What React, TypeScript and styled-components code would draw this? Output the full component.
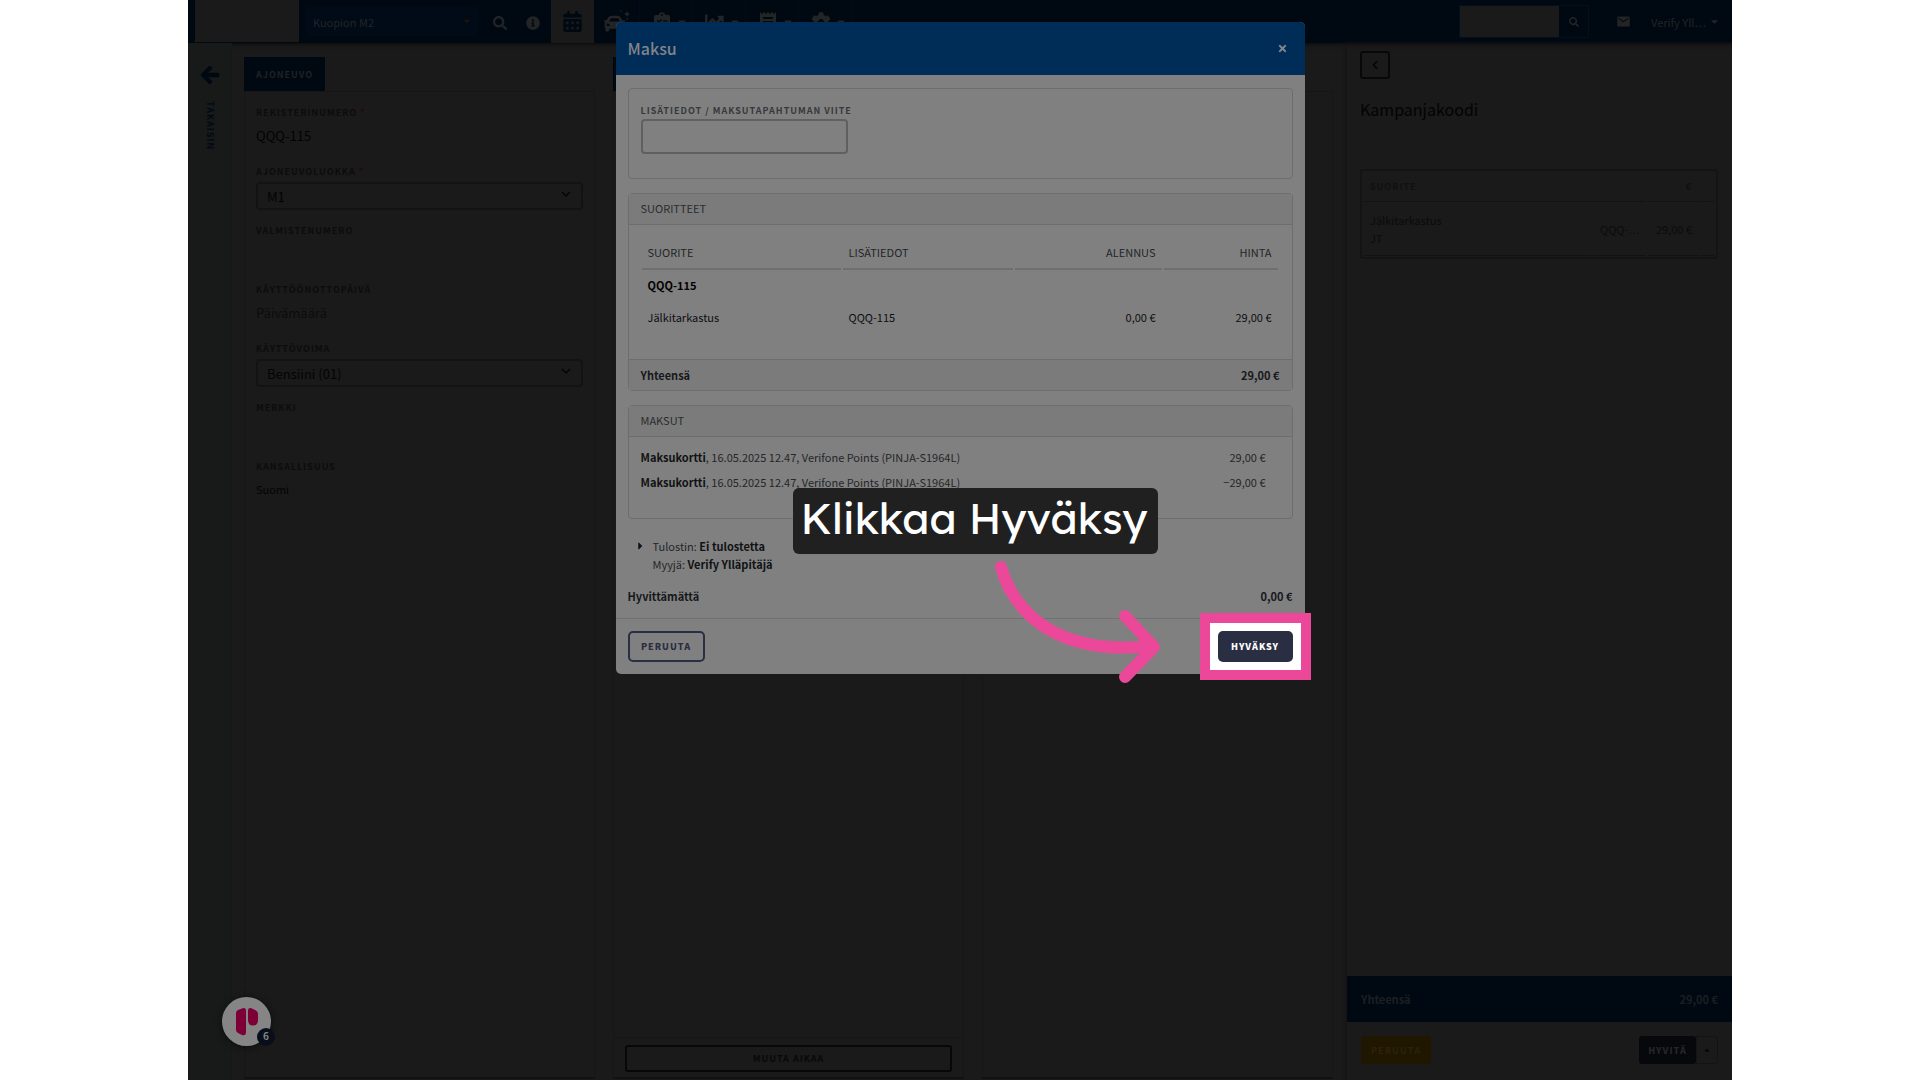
import React from "react";
import styled, { createGlobalStyle } from "styled-components";
import {
  FaArrowLeft,
  FaCalendarAlt,
  FaCar,
  FaCaretDown,
  FaCaretRight,
  FaCaretUp,
  FaChartLine,
  FaChevronLeft,
  FaCog,
  FaInfoCircle,
  FaSearch,
  FaTimes,
} from "react-icons/fa";
import { MdMail } from "react-icons/md";

const sans = `"Source Sans Pro", "Noto Sans CJK SC", "Noto Sans", sans-serif`;
const c = {
  page: "#1a1a1a",
  rail: "#181a19",
  navy: "#000912",
  line: "#161616",
  ink: "#030303",
  label: "#0c0c0c",
  onNavy: "#222426",
  modal: "#808080",
  modalHead: "#002c58",
  modalBar: "#7b7b7b",
  modalLine: "#6d6d6d",
  modalInk: "#16181b",
  modalLabel: "#36383b",
  dark: "#2a2e43",
  pink: "#ec4899",
};

const Global = createGlobalStyle`
  *, *::before, *::after { box-sizing: border-box; }
  body { margin: 0; background: #fff; font-family: ${sans}; }
  button, input, select { font-family: inherit; margin: 0; }
`;

/* ---------- page ---------- */
const Shell = styled.div`
  position: relative;
  display: flex;
  flex-direction: column;
  max-width: 1544px;
  height: 100vh;
  margin: 0 auto;
  overflow: hidden;
  background: ${c.page};
  color: ${c.ink};
  font-size: 12px;
  line-height: 18px;
`;

const TopBar = styled.header`
  display: flex;
  align-items: stretch;
  height: 43px;
  flex: none;
  padding-left: 7px;
  background: ${c.navy};
  box-shadow: 0 1px 4px #0a0a0a;
`;

const Brand = styled.div`
  width: 104px;
  margin: 0 7px 1px 0;
  background: ${c.page};
`;

const SitePicker = styled.div`
  position: relative;
  width: 172px;
  align-self: center;
  color: #231008;
  svg { position: absolute; right: 6px; top: 9px; pointer-events: none; }
`;

const SiteSelect = styled.select`
  display: block;
  width: 100%;
  height: 29px;
  padding: 0 7px;
  border: 0;
  appearance: none;
  background: #000b17;
  color: ${c.onNavy};
  font-size: 11px;
`;

const Tools = styled.div`
  display: flex;
  gap: 19px;
  padding: 2px 11px 0 15px;
`;

const BarButton = styled.button<{ $width: number; $active?: boolean; $line?: boolean }>`
  display: flex;
  align-items: center;
  justify-content: center;
  width: ${(p) => p.$width}px;
  padding: 0;
  border: 0;
  border-right: ${(p) => (p.$line ? "1px solid #010c17" : "0")};
  background: ${(p) => (p.$active ? c.page : "transparent")};
  color: ${(p) => (p.$active ? c.navy : c.onNavy)};
`;

const MenuButton = styled(BarButton)`
  justify-content: space-between;
  padding: 0 4px 0 11px;
`;

const MenuIcon = styled.span`
  display: flex;
  justify-content: center;
  width: 22px;
`;

const Spring = styled.div`
  flex: 1;
`;

const SearchForm = styled.form`
  display: flex;
  align-self: center;
  height: 33px;
  margin-right: 27px;
  border: 1px solid #00101f;
`;

const SearchInput = styled.input`
  width: 99px;
  padding: 0 8px;
  border: 0;
  background: ${c.page};
  color: ${c.ink};
`;

const SearchSubmit = styled.button`
  display: flex;
  align-items: center;
  justify-content: center;
  width: 29px;
  padding: 0;
  border: 0;
  background: ${c.navy};
  color: ${c.onNavy};
`;

const UserButton = styled.button`
  display: flex;
  align-items: center;
  justify-content: space-between;
  width: 69px;
  margin: 0 12px 0 20px;
  padding: 0;
  border: 0;
  background: none;
  color: ${c.onNavy};
  font-size: 11px;
  white-space: nowrap;
`;

const Body = styled.div`
  display: flex;
  flex: 1;
  min-height: 0;
`;

const Rail = styled.nav`
  width: 44px;
  flex: none;
  padding-top: 22px;
  background: ${c.rail};
  border-right: 1px solid #161817;
`;

const BackLink = styled.a`
  display: flex;
  flex-direction: column;
  align-items: center;
  gap: 16px;
  color: ${c.navy};
  font-size: 9px;
  line-height: 12px;
  font-weight: 700;
  letter-spacing: 1px;
  text-decoration: none;
  svg { stroke: ${c.navy}; stroke-width: 30; }
  span { writing-mode: vertical-rl; }
`;

const Columns = styled.main`
  display: grid;
  grid-template-columns: repeat(3, 1fr);
  gap: 18px;
  flex: 1;
  min-width: 0;
  padding: 14px 14px 1px 12px;
`;

const Column = styled.section`
  display: flex;
  flex-direction: column;
  align-items: flex-start;
`;

const Tab = styled.h2`
  margin: 0;
  height: 34px;
  padding: 0 12px;
  background: ${c.navy};
  color: #202225;
  font-size: 9px;
  line-height: 36px;
  font-weight: 700;
  letter-spacing: 1px;
`;

const Panel = styled.div`
  display: flex;
  flex-direction: column;
  flex: 1;
  width: 100%;
  border: 1px solid ${c.line};
  border-bottom: 2px solid #121212;
`;

const Fields = styled.div`
  flex: 1;
  padding: 13px 11px;
`;

const Field = styled.div`
  height: 59px;
`;

const FieldLabel = styled.label`
  display: block;
  height: 18px;
  color: ${c.label};
  font-size: 9px;
  line-height: 16px;
  font-weight: 700;
  letter-spacing: 1px;
`;

const Star = styled.span`
  color: #2a0505;
`;

const FieldValue = styled.output<{ $small?: boolean; $faint?: boolean }>`
  display: block;
  color: ${(p) => (p.$faint ? c.label : c.ink)};
  font-size: ${(p) => (p.$small ? 11 : 13)}px;
  line-height: 25px;
`;

const SelectWrap = styled.div`
  position: relative;
  svg { position: absolute; right: 12px; top: 7px; pointer-events: none; }
`;

const FieldSelect = styled.select`
  display: block;
  width: 100%;
  height: 28px;
  padding: 1px 9px 0;
  border: 2px solid #131313;
  border-radius: 4px;
  appearance: none;
  background: transparent;
  color: ${c.ink};
  font-size: 13px;
`;

const PanelFooter = styled.footer`
  display: flex;
  padding: 7px 11px 5px;
  border-top: 1px solid ${c.line};
`;

const ChangeTime = styled.button`
  flex: 1;
  height: 27px;
  padding: 0;
  border: 2px solid #070707;
  border-radius: 3px;
  background: none;
  color: #080808;
  font-size: 9px;
  font-weight: 700;
  letter-spacing: 1px;
`;

const Sidebar = styled.aside`
  display: flex;
  flex-direction: column;
  width: 385px;
  flex: none;
  box-shadow: -2px 0 3px #151515;
`;

const SidebarMain = styled.div`
  flex: 1;
  padding: 8px 14px 8px 13px;
`;

const Collapse = styled.button`
  display: flex;
  align-items: center;
  justify-content: center;
  width: 30px;
  height: 28px;
  padding: 0;
  border: 2px solid #06080a;
  border-radius: 3px;
  background: none;
  color: #050505;
`;

const SidebarTitle = styled.h2`
  margin: 17px 0 47px;
  font-size: 16px;
  line-height: 26px;
  font-weight: 400;
`;

const CartBox = styled.div`
  height: 90px;
  border: 2px solid #141414;
  border-radius: 3px;
`;

const Cart = styled.table`
  width: 100%;
  table-layout: fixed;
  border-spacing: 2px 0;
  th, td { padding: 1px 6px 0; border-bottom: 1px solid #121212; text-align: left; font-size: 11px; }
  th { height: 31px; color: #101010; font-size: 9px; font-weight: 700; letter-spacing: 1px; }
  td { height: 54px; color: #0b0b0b; }
  th + th, td + td { text-align: right; white-space: nowrap; }
`;

const TotalBar = styled.div`
  display: flex;
  justify-content: space-between;
  padding: 14px;
  background: ${c.navy};
  color: #1c1f22;
  font-size: 11px;
  font-weight: 700;
`;

const Actions = styled.div`
  display: flex;
  justify-content: space-between;
  padding: 14px 14px 16px;
`;

const ActionButton = styled.button<{ $bg: string; $ink: string; $width: number }>`
  width: ${(p) => p.$width}px;
  height: 28px;
  padding: 0;
  border: 0;
  border-radius: 3px;
  background: ${(p) => p.$bg};
  color: ${(p) => p.$ink};
  font-size: 9px;
  font-weight: 900;
  letter-spacing: 1px;
`;

const Split = styled.div`
  display: flex;
`;

const SplitToggle = styled.button`
  display: flex;
  align-items: center;
  justify-content: center;
  width: 22px;
  padding: 0;
  border: 1px solid #121315;
  border-radius: 0 3px 3px 0;
  background: none;
  color: ${c.ink};
`;

const Chat = styled.button`
  position: absolute;
  left: 34px;
  bottom: 34px;
  display: flex;
  align-items: center;
  justify-content: center;
  width: 49px;
  height: 49px;
  padding: 0;
  border: 0;
  border-radius: 50%;
  background: #858585;
  box-shadow: 0 1px 6px #0c0c0c;
`;

const ChatBadge = styled.span`
  position: absolute;
  right: -4px;
  bottom: 0;
  width: 18px;
  height: 18px;
  border-radius: 50%;
  background: #080f1a;
  color: #858585;
  font-size: 10px;
  line-height: 16px;
  font-weight: 700;
`;

/* ---------- payment dialog ---------- */
const Layer = styled.div`
  position: absolute;
  inset: 0;
  display: flex;
  align-items: flex-start;
  justify-content: center;
  padding: 22px 16px;
`;

const Modal = styled.div`
  position: relative;
  width: 100%;
  max-width: 689px;
  border-radius: 5px;
  background: ${c.modal};
  color: ${c.modalInk};
  font-size: 11px;
`;

const ModalHead = styled.header`
  display: flex;
  align-items: center;
  justify-content: space-between;
  height: 53px;
  padding: 0 16px 0 12px;
  border-radius: 5px 5px 0 0;
  background: ${c.modalHead};
  color: #828487;
`;

const ModalTitle = styled.h1`
  margin: 0;
  padding-bottom: 1px;
  font-size: 16px;
  line-height: 24px;
  font-weight: 500;
`;

const Close = styled.button`
  display: flex;
  align-items: center;
  justify-content: center;
  width: 12px;
  height: 20px;
  padding: 0;
  border: 0;
  background: none;
  color: #828487;
`;

const ModalBody = styled.div`
  display: flex;
  flex-direction: column;
  gap: 14px;
  padding: 13px 12px;
`;

const Card = styled.section`
  border: 1px solid ${c.modalLine};
  border-radius: 4px;
`;

const Reference = styled.div`
  padding: 14px 12px 24px;
`;

const ReferenceLabel = styled.label`
  display: block;
  color: ${c.modalLabel};
  font-size: 9px;
  line-height: 16px;
  font-weight: 700;
  letter-spacing: 1px;
`;

const ReferenceInput = styled.input`
  display: block;
  width: 207px;
  height: 35px;
  padding: 0 8px;
  border: 2px solid #606060;
  border-radius: 4px;
  background: transparent;
  font-size: 12px;
`;

const CardTitle = styled.h2`
  margin: 0;
  padding: 5px 12px 7px;
  border-bottom: 1px solid ${c.modalLine};
  background: ${c.modalBar};
  color: #2a2c2e;
  font-size: 11px;
  line-height: 18px;
  font-weight: 400;
`;

const Items = styled.table`
  width: calc(100% - 23px);
  margin: 11px 12px 25px 11px;
  table-layout: fixed;
  border-spacing: 2px 0;
  th, td { height: 32px; padding: 0 6px 2px; text-align: left; color: #0d0e10; font-weight: 400; white-space: nowrap; }
  thead th { height: 34px; padding-bottom: 0; border-bottom: 2px solid #6f6f6f; color: #232527; }
  tbody th { font-weight: 700; color: #020202; }
  th:nth-child(n + 3), td:nth-child(n + 3) { text-align: right; }
`;

const Col = styled.col<{ $width?: number }>`
  width: ${(p) => (p.$width ? `${p.$width}px` : "auto")};
`;

const CardTotal = styled.footer`
  display: flex;
  justify-content: space-between;
  padding: 6px 12px;
  border-top: 1px solid ${c.modalLine};
  background: ${c.modalBar};
  font-weight: 700;
`;

const Payments = styled.ul`
  margin: 0;
  padding: 8px 26px 23px 12px;
  list-style: none;
`;

const Payment = styled.li`
  display: flex;
  justify-content: space-between;
  color: #242628;
  line-height: 25px;
  b { color: #101214; }
`;

const Receipt = styled.div`
  display: flex;
  align-items: flex-start;
  gap: 7px;
  padding: 4px 0 0 7px;
  color: #242628;
  p { margin: 0; line-height: 18px; }
  b { color: #101214; }
`;

const Disclose = styled.button`
  display: flex;
  align-items: center;
  width: 11px;
  height: 18px;
  padding: 0;
  border: 0;
  background: none;
  color: #101214;
`;

const Balance = styled.div`
  display: flex;
  justify-content: space-between;
  font-weight: 700;
`;

const ModalFoot = styled.footer`
  display: flex;
  align-items: center;
  justify-content: space-between;
  padding: 12px;
  border-top: 1px solid #717171;
`;

const Cancel = styled.button`
  width: 77px;
  height: 31px;
  padding: 0;
  border: 2px solid ${c.dark};
  border-radius: 5px;
  background: none;
  color: ${c.dark};
  font-size: 9px;
  font-weight: 900;
  letter-spacing: 1px;
`;

const Spotlight = styled.div`
  position: relative;
  &::before {
    content: "";
    position: absolute;
    inset: -18px;
    border: 10px solid ${c.pink};
    background: #fff;
  }
`;

const Approve = styled.button`
  position: relative;
  display: block;
  width: 75px;
  height: 31px;
  padding: 0;
  border: 0;
  border-radius: 5px;
  background: ${c.dark};
  color: #fff;
  font-size: 9px;
  font-weight: 900;
  letter-spacing: 1px;
`;

const Callout = styled.div`
  position: absolute;
  left: 177px;
  top: 466px;
  width: 365px;
  height: 66px;
  padding-right: 2px;
  border-radius: 6px;
  background: #202020;
  color: #fff;
  font-family: Lexend, Inter, sans-serif;
  font-size: 43px;
  line-height: 61px;
  text-align: center;
  white-space: nowrap;
`;

const CalloutArrow = styled.svg`
  position: absolute;
  left: 377px;
  top: 535px;
`;

const CarWash = () => (
  <svg width="26" height="24" viewBox="0 0 26 24" fill="currentColor" aria-hidden="true">
    <FaCar size={21} y={3} />
    <path d="M20 4l2-1 1-2 1 2 2 1-2 1-1 2-1-2zM16 1l1-1 1 1-1 1zM22 9l1-1 1 1-1 1z" />
  </svg>
);

const Checklist = () => (
  <svg width="16" height="20" viewBox="0 0 18 22" fill="currentColor" aria-hidden="true">
    <path
      fillRule="evenodd"
      d="M2 3H5.500Q6 0 9 0T12.500 3H16Q18 3 18 5V20Q18 22 16 22H2Q0 22 0 20V5Q0 3 2 3ZM9 2A1.200 1.200 0 1 0 9 4.400A1.200 1.200 0 1 0 9 2ZM3 9.500L5.500 12L9 8.500L8 7.500L5.500 10L4 8.500ZM10 9V10.500H15V9ZM3 15.500L5.500 18L9 14.500L8 13.500L5.500 16L4 14.500ZM10 15V16.500H15V15Z"
    />
  </svg>
);

const TillReceipt = () => (
  <svg width="16" height="20" viewBox="0 0 16 20" fill="currentColor" aria-hidden="true">
    <path
      fillRule="evenodd"
      d="M0 0L2 2L4 0L6 2L8 0L10 2L12 0L14 2L16 0V20L14 18L12 20L10 18L8 20L6 18L4 20L2 18L0 20ZM3 5V7H13V5ZM3 9V11H13V9ZM3 13V15H13V13Z"
    />
  </svg>
);

const menus = [
  { name: "Tarkastukset", icon: <Checklist /> },
  { name: "Raportit", icon: <FaChartLine size={20} /> },
  { name: "Kassa", icon: <TillReceipt /> },
  { name: "Asetukset", icon: <FaCog size={20} /> },
];

const Chevron = () => (
  <svg width="10" height="10" viewBox="0 0 10 10" fill="none" stroke="#050505" strokeWidth="1.500" aria-hidden="true">
    <path d="M1 3l4 4 4-4" />
  </svg>
);

const vehicle = [
  { id: "reg", label: "REKISTERINUMERO", required: true, value: "QQQ-115" },
  { id: "class", label: "AJONEUVOLUOKKA", required: true, option: "M1" },
  { id: "vin", label: "VALMISTENUMERO", value: "" },
  { id: "date", label: "KÄYTTÖÖNOTTOPÄIVÄ", value: "Päivämäärä", faint: true },
  { id: "fuel", label: "KÄYTTÖVOIMA", option: "Bensiini (01)" },
  { id: "make", label: "MERKKI", value: "" },
  { id: "nation", label: "KANSALLISUUS", value: "Suomi", small: true },
];

const payments = ["29,00 €", "−29,00 €"];

export default function App() {
  return (
    <Shell>
      <Global />
      <TopBar>
        <Brand />
        <SitePicker>
          <SiteSelect aria-label="Toimipaikka">
            <option>Kuopion M2</option>
          </SiteSelect>
          <FaCaretDown size={10} />
        </SitePicker>
        <Tools>
          <BarButton $width={14} aria-label="Haku"><FaSearch size={14} /></BarButton>
          <BarButton $width={14} aria-label="Tietoja"><FaInfoCircle size={14} /></BarButton>
        </Tools>
        <BarButton $width={43} $active aria-label="Kalenteri"><FaCalendarAlt size={21} /></BarButton>
        <BarButton $width={46} $line aria-label="Ajoneuvot"><CarWash /></BarButton>
        {menus.map((m) => (
          <MenuButton key={m.name} $width={53} $line aria-label={m.name}>
            <MenuIcon>{m.icon}</MenuIcon>
            <FaCaretDown size={12} />
          </MenuButton>
        ))}
        <Spring />
        <SearchForm>
          <SearchInput aria-label="Hae" />
          <SearchSubmit type="button" aria-label="Hae"><FaSearch size={10} /></SearchSubmit>
        </SearchForm>
        <BarButton $width={15} aria-label="Viestit"><MdMail size={17} /></BarButton>
        <UserButton>
          Verify Yll…
          <FaCaretDown size={11} />
        </UserButton>
      </TopBar>

      <Body>
        <Rail>
          <BackLink href="#takaisin">
            <FaArrowLeft size={20} />
            <span>TAKAISIN</span>
          </BackLink>
        </Rail>
        <Columns>
          <Column>
            <Tab>AJONEUVO</Tab>
            <Panel>
              <Fields>
                {vehicle.map((f) => (
                  <Field key={f.id}>
                    <FieldLabel htmlFor={f.id}>
                      {f.label}
                      {f.required && <Star> *</Star>}
                    </FieldLabel>
                    {f.option ? (
                      <SelectWrap>
                        <FieldSelect id={f.id}>
                          <option>{f.option}</option>
                        </FieldSelect>
                        <Chevron />
                      </SelectWrap>
                    ) : (
                      <FieldValue id={f.id} $small={f.small} $faint={f.faint}>{f.value}</FieldValue>
                    )}
                  </Field>
                ))}
              </Fields>
            </Panel>
          </Column>
          <Column>
            <Tab />
            <Panel>
              <Fields />
              <PanelFooter>
                <ChangeTime>MUUTA AIKAA</ChangeTime>
              </PanelFooter>
            </Panel>
          </Column>
          <Column>
            <Tab />
            <Panel />
          </Column>
        </Columns>
        <Sidebar>
          <SidebarMain>
            <Collapse aria-label="Pienennä"><FaChevronLeft size={10} /></Collapse>
            <SidebarTitle>Kampanjakoodi</SidebarTitle>
            <CartBox>
              <Cart>
                <colgroup>
                  <Col />
                  <Col $width={53} />
                  <Col $width={50} />
                  <Col $width={14} />
                </colgroup>
                <thead>
                  <tr><th>SUORITE</th><th /><th>€</th><th /></tr>
                </thead>
                <tbody>
                  <tr><td>Jälkitarkastus<br />JT</td><td>QQQ-…</td><td>29,00 €</td><td /></tr>
                </tbody>
              </Cart>
            </CartBox>
          </SidebarMain>
          <TotalBar>
            <span>Yhteensä</span>
            <span>29,00 €</span>
          </TotalBar>
          <Actions>
            <ActionButton $bg="#201700" $ink="#2c2109" $width={70}>PERUUTA</ActionButton>
            <Split>
              <ActionButton $bg="#06080b" $ink="#24262a" $width={57}>HYVITÄ</ActionButton>
              <SplitToggle aria-label="Lisää toimintoja"><FaCaretUp size={8} /></SplitToggle>
            </Split>
          </Actions>
        </Sidebar>
      </Body>

      <Chat aria-label="Avaa tuki">
        <svg width="22" height="28" viewBox="0 0 22 28" fill="#7c0036" aria-hidden="true">
          <path d="M0 5Q0 3 2 2L6 .4Q10 -1 10 3V24Q10 28 6 27L2 25Q0 24 0 22Z" />
          <path d="M12 3Q12 -1 16 .4L20 2.500Q22 3.500 22 6V12Q22 17.500 17 17.500Q12 17.500 12 12Z" />
        </svg>
        <ChatBadge>6</ChatBadge>
      </Chat>

      <Layer>
        <Modal role="dialog" aria-label="Maksu">
          <ModalHead>
            <ModalTitle>Maksu</ModalTitle>
            <Close aria-label="Sulje"><FaTimes size={11} /></Close>
          </ModalHead>
          <ModalBody>
            <Card>
              <Reference>
                <ReferenceLabel htmlFor="viite">LISÄTIEDOT / MAKSUTAPAHTUMAN VIITE</ReferenceLabel>
                <ReferenceInput id="viite" />
              </Reference>
            </Card>
            <Card>
              <CardTitle>SUORITTEET</CardTitle>
              <Items>
                <colgroup>
                  <Col />
                  <Col $width={170} />
                  <Col $width={147} />
                  <Col $width={114} />
                </colgroup>
                <thead>
                  <tr><th>SUORITE</th><th>LISÄTIEDOT</th><th>ALENNUS</th><th>HINTA</th></tr>
                </thead>
                <tbody>
                  <tr><th colSpan={4}>QQQ-115</th></tr>
                  <tr><td>Jälkitarkastus</td><td>QQQ-115</td><td>0,00 €</td><td>29,00 €</td></tr>
                </tbody>
              </Items>
              <CardTotal>
                <span>Yhteensä</span>
                <span>29,00 €</span>
              </CardTotal>
            </Card>
            <Card>
              <CardTitle>MAKSUT</CardTitle>
              <Payments>
                {payments.map((sum) => (
                  <Payment key={sum}>
                    <span><b>Maksukortti</b>, 16.05.2025 12.47, Verifone Points (PINJA-S1964L)</span>
                    <span>{sum}</span>
                  </Payment>
                ))}
              </Payments>
            </Card>
            <Receipt>
              <Disclose aria-label="Näytä tulostusasetukset"><FaCaretRight size={12} /></Disclose>
              <div>
                <p>Tulostin: <b>Ei tulostetta</b></p>
                <p>Myyjä: <b>Verify Ylläpitäjä</b></p>
              </div>
            </Receipt>
            <Balance>
              <span>Hyvittämättä</span>
              <span>0,00 €</span>
            </Balance>
          </ModalBody>
          <ModalFoot>
            <Cancel>PERUUTA</Cancel>
            <Spotlight>
              <Approve>HYVÄKSY</Approve>
            </Spotlight>
          </ModalFoot>
          <Callout>Klikkaa Hyväksy</Callout>
          <CalloutArrow width="170" height="135" viewBox="0 0 170 135" fill="none" stroke={c.pink} strokeWidth="12" strokeLinecap="round" strokeLinejoin="round" aria-hidden="true">
            <path d="M8 10C20 52 60 100 160 89" />
            <path d="M132 59L161 90L132 120" />
          </CalloutArrow>
        </Modal>
      </Layer>
    </Shell>
  );
}
